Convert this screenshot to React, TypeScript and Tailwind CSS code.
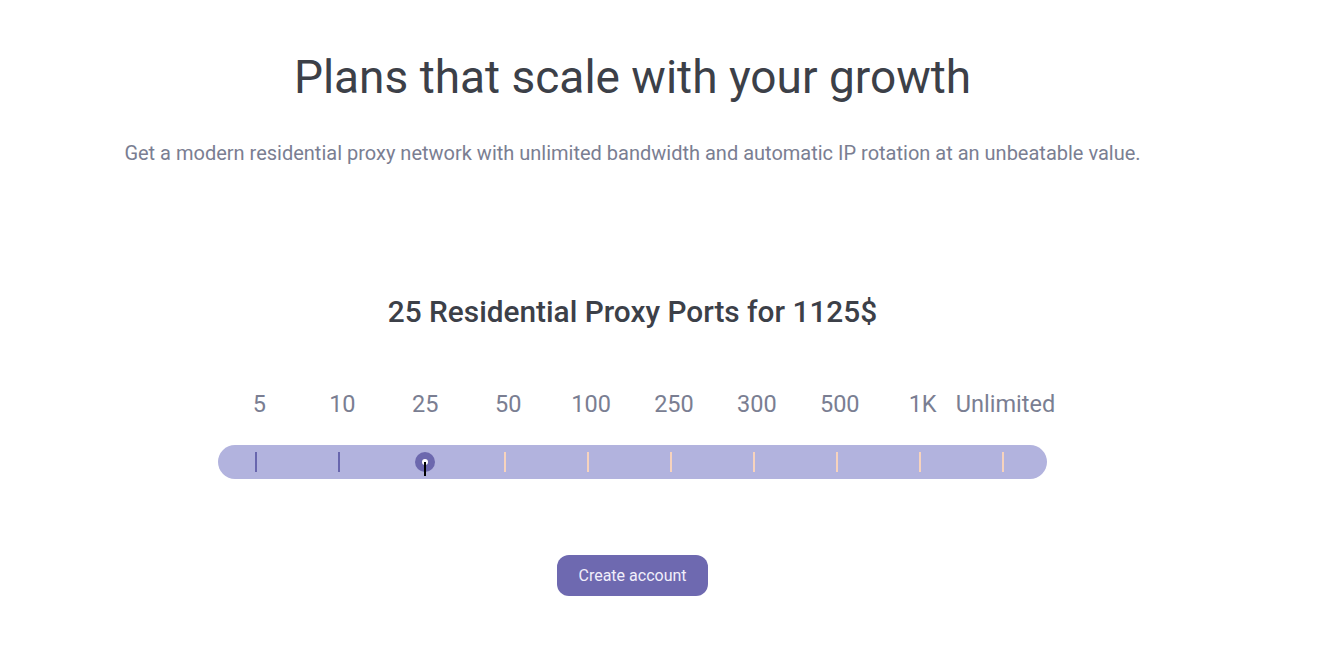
const steps = ["5", "10", "25", "50", "100", "250", "300", "500", "1K", "Unlimited"];

const PriceSlider = ({ selected }: { selected: number }) => {
  return (
    <div className="w-[829px]">
      <div className="grid grid-cols-10 h-[38px] items-center">
        {steps.map((s) => (
          <div key={s} className="flex justify-center whitespace-nowrap text-[23.5px] text-[#7a7e92] leading-none">
            {s}
          </div>
        ))}
      </div>
      <div className="mt-[21px] h-[34px] rounded-full bg-[#b2b3de] grid grid-cols-10 items-center">
        {steps.map((s, i) => (
          <div key={s} className="flex justify-center">
            {i == selected ? (
              <div className="relative w-[20px] h-[20px] rounded-full bg-[#6c68ae] flex items-center justify-center">
                <div className="w-[6px] h-[6px] rounded-full bg-white"></div>
                <div className="absolute left-[9px] top-[10px] w-[2px] h-[14px] bg-black"></div>
              </div>
            ) : (
              <div
                className={
                  i < selected
                    ? "mr-[6px] w-[2px] h-[20px] bg-[#6866ae]"
                    : "mr-[6px] w-[2px] h-[20px] bg-[#f7d3bd]"
                }
              ></div>
            )}
          </div>
        ))}
      </div>
    </div>
  );
};

export default function App() {
  return (
    <div className="w-[1265px] bg-white min-h-[655px] font-['Roboto',sans-serif] flex flex-col items-center">
      <h1 className="mt-[49px] text-[46px] leading-[56px] text-[#3c4048] font-normal">
        Plans that scale with your growth
      </h1>
      <p className="mt-[34px] text-[20px] leading-[28px] text-[#7a7e92]">
        Get a modern residential proxy network with unlimited bandwidth and automatic IP rotation at an unbeatable value.
      </p>
      <h2 className="mt-[127px] text-[29.8px] leading-[36px] font-medium text-[#3c4048]">
        25 Residential Proxy Ports for 1125$
      </h2>
      <div className="mt-[56px]">
        <PriceSlider selected={2} />
      </div>
      <button className="mt-[76px] w-[151px] h-[41px] rounded-[12px] bg-[#6e69b0] text-[16px] text-[#f1effb]">
        Create account
      </button>
    </div>
  );
}
